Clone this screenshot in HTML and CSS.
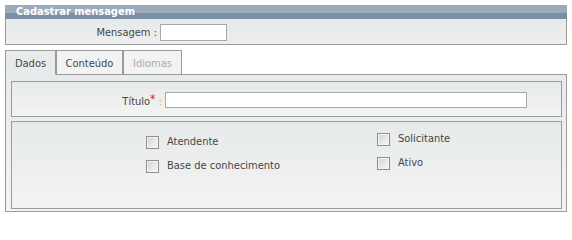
FILE: index.html
```html
<!DOCTYPE html>
<html lang="pt">
<head>
<meta charset="utf-8">
<title>Cadastrar mensagem</title>
<link rel="stylesheet" href="styles.css">
</head>
<body>
<div class="box">
  <div class="box-title">Cadastrar mensagem</div>
  <div class="msg-panel">
    <label class="msg-label" for="msg">Mensagem :</label>
    <input id="msg" class="field msg-input" type="text">
  </div>
</div>

<div class="tabs">
  <div class="tab active">Dados</div>
  <div class="tab">Conteúdo</div>
  <div class="tab disabled">Idiomas</div>
</div>
<div class="tab-panel">
  <div class="fieldset fs-title">
    <label class="title-label" for="titulo">Título<span class="req">*</span> <span class="colon">:</span></label>
    <input id="titulo" class="field title-input" type="text">
  </div>
  <div class="fieldset fs-checks">
    <div class="col col-left">
      <label class="check"><input type="checkbox" class="cb"><span>Atendente</span></label>
      <label class="check"><input type="checkbox" class="cb"><span>Base de conhecimento</span></label>
    </div>
    <div class="col col-right">
      <label class="check"><input type="checkbox" class="cb"><span>Solicitante</span></label>
      <label class="check"><input type="checkbox" class="cb"><span>Ativo</span></label>
    </div>
  </div>
</div>
</body>
</html>
```

FILE: styles.css
```css
html, body {
  background: #ffffff;
}
body {
  margin: 5px;
  width: 562px;
  font-family: "DejaVu Sans Condensed", "DejaVu Sans", Verdana, sans-serif;
  font-stretch: condensed;
  font-size: 11px;
  color: #464646;
}

.box {
  width: 562px;
}
.box-title {
  height: 14px;
  line-height: 14px;
  padding-left: 11px;
  background: linear-gradient(#9aabbc 0, #9aabbc 8px, #7b8fa4 8px, #7b8fa4 14px);
  color: #ffffff;
  font-weight: bold;
}
.msg-panel {
  display: flex;
  align-items: center;
  padding: 5px 0 3px;
  border: 1px solid #9a9a9a;
  border-top: none;
  background: linear-gradient(#e7eaea, #edefef);
}
.msg-label {
  width: 151px;
  margin-right: 3px;
  text-align: right;
}
.field {
  box-sizing: border-box;
  margin: 0;
  padding: 0 2px;
  border: 1px solid #a8a8a8;
  background: #ffffff;
  font: inherit;
}
.msg-input {
  width: 67px;
  height: 17px;
}

.tabs {
  display: flex;
  margin-top: 5px;
  position: relative;
  z-index: 1;
  margin-bottom: -1px;
}
.tab {
  box-sizing: border-box;
  height: 25px;
  padding-top: 3px;
  line-height: 20px;
  text-align: center;
  border: 1px solid #9a9a9a;
  background: #f3f3f3;
  color: #464646;
}
.tab:nth-child(1) { width: 51px; }
.tab:nth-child(2) { width: 67px; }
.tab:nth-child(3) { width: 59px; }
.tab.active {
  background: #e8ebeb;
  border-bottom-color: #e8ebeb;
}
.tab.disabled {
  color: #aaaaaa;
}

.tab-panel {
  box-sizing: border-box;
  width: 562px;
  height: 138px;
  border: 1px solid #9a9a9a;
  padding: 6px 4px 0 5px;
  background: linear-gradient(#e8ebeb, #f3f4f4);
}
.fieldset {
  border: 1px solid #9a9a9a;
  background: linear-gradient(#e7eaea, #f3f4f4);
}
.fs-title {
  display: flex;
  align-items: center;
  padding: 10px 0 8px;
}
.title-label {
  width: 150px;
  margin-right: 3px;
  text-align: right;
}
.req {
  color: #e0283c;
  font-size: 12px;
  vertical-align: 2px;
}
.colon {
  color: #e8962a;
}
.title-input {
  width: 362px;
  height: 16px;
}

.fs-checks {
  margin-top: 4px;
  height: 86px;
  display: flex;
  padding-left: 134px;
}
.col {
  display: flex;
  flex-direction: column;
}
.col-left {
  width: 231px;
  padding-top: 14px;
}
.col-right {
  padding-top: 11px;
}
.check {
  display: flex;
  align-items: flex-start;
  height: 24px;
  line-height: 12px;
}
.cb {
  appearance: none;
  -webkit-appearance: none;
  box-sizing: border-box;
  width: 13px;
  height: 13px;
  margin: 0 8px 0 0;
  border: 1px solid #8e8e8e;
  background: linear-gradient(135deg, #d2d2d2 0%, #e6e6e6 50%, #f8f8f8 100%);
  box-shadow: inset 0 0 0 1px #f4f4f4;
}
```
